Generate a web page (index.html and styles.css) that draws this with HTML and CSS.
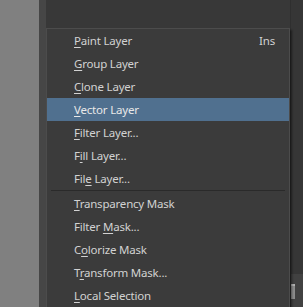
FILE: index.html
```html
<!DOCTYPE html>
<html lang="en">
<head>
  <meta charset="UTF-8">
  <title>Layer Menu</title>
  <link rel="stylesheet" href="styles.css">
</head>
<body>
  <div class="app">
    <div class="canvas"></div>
    <div class="dock-edge"></div>
    <div class="dock">
      <div class="dock-body"></div>
      <div class="scrollbar">
        <div class="scroll-track"></div>
        <div class="scroll-foot">
          <div class="scroll-handle"></div>
        </div>
      </div>
    </div>
  </div>

  <div class="menu">
    <div class="menu-item"><span><u>P</u>aint Layer</span><span class="shortcut">Ins</span></div>
    <div class="menu-item"><span><u>G</u>roup Layer</span></div>
    <div class="menu-item"><span><u>C</u>lone Layer</span></div>
    <div class="menu-item active"><span><u>V</u>ector Layer</span></div>
    <div class="menu-item"><span><u>F</u>ilter Layer...</span></div>
    <div class="menu-item"><span>F<u>i</u>ll Layer...</span></div>
    <div class="menu-item"><span>Fil<u>e</u> Layer...</span></div>
    <div class="separator"></div>
    <div class="menu-item"><span><u>T</u>ransparency Mask</span></div>
    <div class="menu-item"><span>Filter <u>M</u>ask...</span></div>
    <div class="menu-item"><span>C<u>o</u>lorize Mask</span></div>
    <div class="menu-item"><span>T<u>r</u>ansform Mask...</span></div>
    <div class="menu-item"><span><u>L</u>ocal Selection</span></div>
  </div>
</body>
</html>
```

FILE: styles.css
```css
* {
  box-sizing: border-box;
}

body {
  margin: 0;
  width: 303px;
  height: 307px;
  overflow: hidden;
  font-family: 'Noto Sans', 'Liberation Sans', sans-serif;
  background: #383838;
}

.app {
  display: flex;
  height: 307px;
}

.canvas {
  width: 39px;
  background: #808080;
}

.dock-edge {
  width: 7px;
  background: #464646;
}

.dock {
  flex: 1;
  display: flex;
  background: #383838;
}

.dock-body {
  flex: 1;
}

.scrollbar {
  width: 13px;
  display: flex;
  flex-direction: column;
  border-left: 1px solid #2f2f2f;
}

.scroll-track {
  height: 274px;
  background: #363636;
}

.scroll-foot {
  flex: 1;
  background: #414141;
  padding-top: 10px;
}

.scroll-handle {
  width: 4px;
  height: 15px;
  background: #8c8c8c;
  border-top: 2px solid #b0b0b0;
}

/* popup menu */
.menu {
  position: absolute;
  left: 46px;
  top: 28px;
  width: 244px;
  background: #3b3b3b;
  border: 1px solid #4c4c4c;
  box-shadow: 2px 2px 2px rgba(0, 0, 0, 0.45);
}

.menu-item {
  height: 23px;
  display: flex;
  align-items: center;
  justify-content: space-between;
  padding: 0 14px 0 27px;
  color: #d2d2d2;
  font-size: 11.5px;
  letter-spacing: -0.2px;
}

.menu-item u {
  text-underline-offset: 2px;
}

.menu-item.active {
  background: #50708f;
  color: #e8e8e8;
}

.separator {
  height: 2px;
  margin: 0 4px;
  border-top: 1px solid #2a2a2a;
}
```
